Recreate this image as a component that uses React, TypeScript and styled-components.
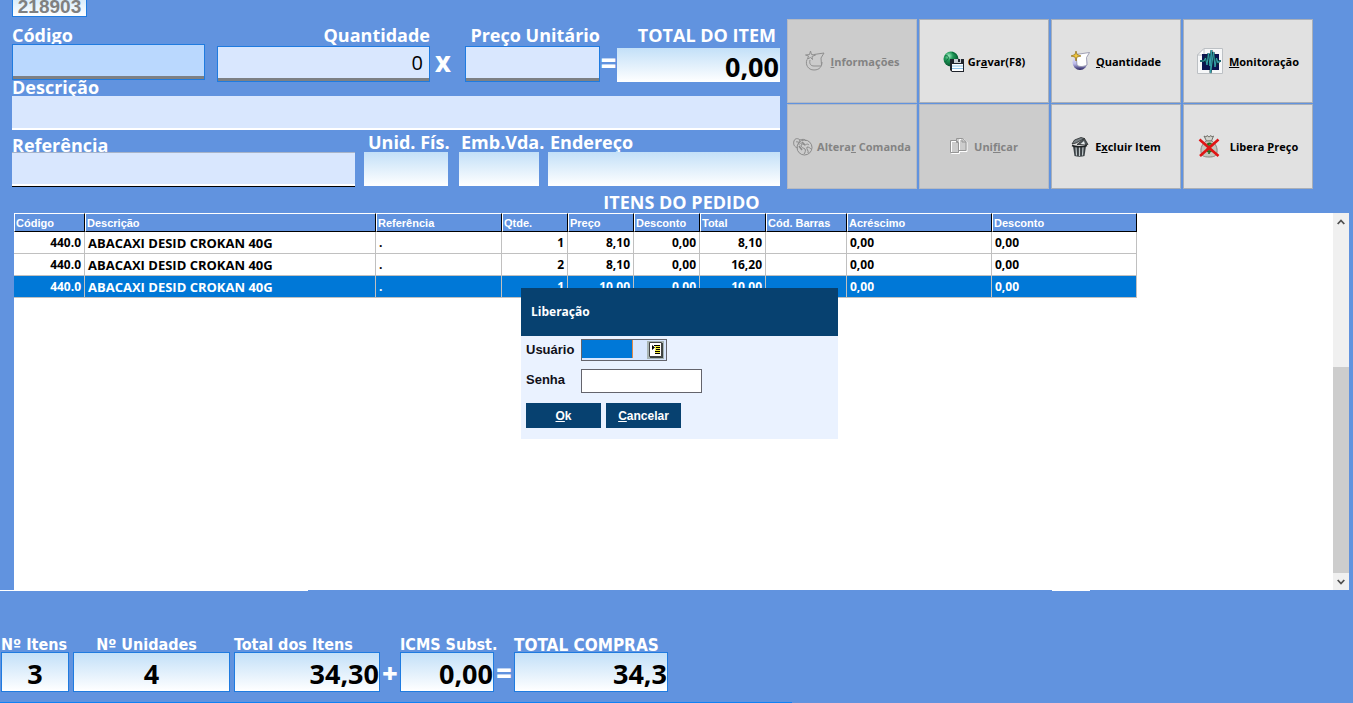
import React from "react";
import styled, { createGlobalStyle, css } from "styled-components";

const ui = `"Open Sans", "Noto Sans", sans-serif`;
const classic = `"Liberation Sans", Arial, sans-serif`;
const tahoma = `"DejaVu Sans Condensed", "DejaVu Sans", sans-serif`;
const blue = "#6193df";
const edge = "#1f7be0";
const navy = "#074170";

const GlobalStyle = createGlobalStyle`
  * { box-sizing: border-box; }
  body { margin: 0; background: ${blue}; font-family: ${ui}; }
  input, button { font-family: inherit; margin: 0; border-radius: 0; }
`;

const Page = styled.main`
  display: flex;
  flex-direction: column;
  min-height: 100vh;
  background: ${blue};
`;

const TopPanel = styled.section`
  display: flex;
  gap: 7px;
  padding: 0 40px 0 12px;
`;

const Form = styled.form`
  flex: 1;
  min-width: 0;
  display: flex;
  flex-direction: column;
`;

const OrderNumber = styled.output`
  width: 75px;
  height: 17px;
  margin-bottom: 9px;
  border: 1px solid ${edge};
  border-top: 0;
  background: linear-gradient(#d9ecfa, #fff);
  color: #808080;
  font: bold 19px/13px ${classic};
  text-align: center;
`;

const ItemRow = styled.div`
  display: grid;
  grid-template-columns: 193fr 12px 213fr 35px 135fr 17px 163fr;
`;

const RefRow = styled.div`
  display: grid;
  grid-template-columns: 343fr 9px 84fr 11px 80fr 9px 232fr;
`;

const Field = styled.div<{ $end?: boolean; $col?: number }>`
  display: flex;
  flex-direction: column;
  min-width: 0;
  ${(p) => p.$col && `grid-column: ${p.$col};`}
  ${(p) => p.$end && "text-align: right;"}
`;

const Label = styled.label<{ $height: number; $line: number; $inset?: number }>`
  height: ${(p) => p.$height}px;
  padding: 0 ${(p) => p.$inset ?? 0}px;
  line-height: ${(p) => p.$line}px;
  color: #fff;
  font-size: 18px;
  font-weight: 700;
  white-space: nowrap;
`;

type Look = "active" | "raised" | "flat" | "sunken" | "glow";

const looks = {
  active: css`
    height: 36px;
    background: #bad8fe;
    border: 1px solid ${edge};
    box-shadow: inset 0 -3px #7d8084;
  `,
  raised: css`
    height: 36px;
    padding-bottom: 3px;
    background: #d9e7fe;
    border: 1px solid ${edge};
    box-shadow: inset 0 -3px #7d8084;
  `,
  flat: css`
    height: 34px;
    background: #d9e7fe;
    border: 0;
    border-bottom: 2px solid #fff;
  `,
  sunken: css`
    height: 35px;
    background: #d9e7fe;
    border: 0;
    border-top: 1px solid #a8b4c8;
    border-bottom: 1px solid #000;
    box-shadow: inset 0 -2px #fff;
  `,
  glow: css`
    height: 34px;
    background: linear-gradient(#c3e0f8, #fff);
    border: 0;
  `,
};

const TextBox = styled.input<{ $look: Look }>`
  width: 100%;
  padding: 0 6px;
  color: #000;
  font-size: 20px;
  text-align: inherit;
  outline: none;
  ${(p) => looks[p.$look]}
`;

const AmountBox = styled(TextBox)`
  padding: 2px 1px 0;
  font-size: 27px;
  font-weight: 700;
`;

const Operator = styled.span<{ $size: number; $start?: boolean }>`
  align-self: end;
  height: 36px;
  padding-left: ${(p) => (p.$start ? 5 : 0)}px;
  color: #fff;
  font-size: ${(p) => p.$size}px;
  font-weight: 800;
  line-height: 34px;
  text-align: ${(p) => (p.$start ? "left" : "center")};
`;

const Actions = styled.div`
  display: grid;
  grid-template-columns: repeat(4, 130px);
  grid-template-rows: 84px 85px;
  gap: 1px 2px;
  padding-top: 19px;
`;

const ActionButton = styled.button<{ $gap?: number }>`
  display: flex;
  align-items: center;
  justify-content: center;
  gap: ${(p) => p.$gap ?? 6}px;
  padding: 0;
  border: 1px solid #a9afb8;
  background: #e1e1e1;
  color: #000;
  font-size: 11px;
  font-weight: 700;
  white-space: nowrap;
  &:disabled {
    border-color: #b6bac2;
    background: #ccc;
    color: #838383;
  }
  svg { flex: none; }
`;

const SectionTitle = styled.h1`
  margin: 0 4px 0 14px;
  height: 24px;
  color: #fff;
  font-size: 18px;
  font-weight: 700;
  line-height: 26px;
  text-align: center;
`;

const ListPanel = styled.section`
  position: relative;
  flex: 1;
  display: flex;
  min-height: 377px;
  margin: 0 4px 0 14px;
  background: #fff;
`;

const TableArea = styled.div`
  flex: 1;
  min-width: 0;
`;

const Table = styled.table`
  width: 1123px;
  table-layout: fixed;
  border-collapse: separate;
  border-spacing: 0;
`;

const HeadCell = styled.th`
  height: 19px;
  padding: 0 0 0 1px;
  border: 1px solid #000;
  border-top-color: #fff;
  border-left-color: #fff;
  background: ${blue};
  color: #fff;
  font: bold 11px/16px ${classic};
  text-align: left;
  white-space: nowrap;
`;

const BodyRow = styled.tr<{ $selected?: boolean }>`
  background: ${(p) => (p.$selected ? "#0078d7" : "#fff")};
  color: ${(p) => (p.$selected ? "#fff" : "#000")};
`;

const Cell = styled.td<{ $end?: boolean; $name?: boolean }>`
  height: 22px;
  padding: 1px 3px 0;
  border-right: 1px solid #c0c0c0;
  border-bottom: 1px solid #c0c0c0;
  font-size: ${(p) => (p.$name ? 13 : 12)}px;
  font-weight: 700;
  line-height: 20px;
  text-align: ${(p) => (p.$end ? "right" : "left")};
  white-space: nowrap;
`;

const ScrollBar = styled.div`
  display: flex;
  flex-direction: column;
  width: 16px;
  background: #f0f0f0;
`;

const ScrollArrow = styled.button`
  display: flex;
  align-items: center;
  justify-content: center;
  height: 17px;
  padding: 0;
  border: 0;
  background: #f0f0f0;
`;

const ScrollTrack = styled.div`
  flex: 137;
`;

const ScrollThumb = styled.div`
  flex: 206;
  background: #cdcdcd;
`;

const Dialog = styled.form`
  position: absolute;
  top: 75px;
  left: 507px;
  width: 317px;
  background: #eaf2ff;
  font-family: ${classic};
`;

const DialogTitle = styled.h2`
  margin: 0;
  padding-left: 10px;
  background: ${navy};
  color: #fff;
  font: bold 12px/48px ${ui};
`;

const DialogBody = styled.div`
  display: grid;
  grid-template-columns: 55px auto;
  padding: 3px 5px 11px;
`;

const DialogLabel = styled.label`
  color: #101018;
  font-size: 13px;
  font-weight: 700;
  line-height: 22px;
`;

const Lookup = styled.div`
  display: flex;
  width: 86px;
  height: 22px;
  margin-bottom: 8px;
  padding-right: 2px;
  border: 1px solid #64646c;
  background: #d9e7fe;
`;

const LookupInput = styled.input`
  width: 51px;
  height: 18px;
  padding: 0;
  border: 0;
  border-right: 1px solid #e08a4a;
  background: #0078d7;
  color: #fff;
  outline: none;
`;

const LookupButton = styled.button`
  display: flex;
  align-items: center;
  justify-content: center;
  width: 17px;
  height: 18px;
  margin: 1px 0 0 auto;
  padding: 0;
  border: 0;
  background: #a9b5b5;
`;

const PasswordInput = styled.input`
  width: 121px;
  height: 24px;
  margin-bottom: 10px;
  border: 1px solid #64646c;
  background: #fff;
  outline: none;
`;

const DialogActions = styled.div`
  grid-column: 1 / -1;
  display: flex;
  gap: 5px;
`;

const DialogButton = styled.button`
  width: 75px;
  height: 25px;
  padding: 0;
  border: 0;
  background: ${navy};
  color: #fff;
  font-size: 12px;
  font-weight: 700;
`;

const Footer = styled.footer`
  display: flex;
  align-items: flex-start;
  height: 113px;
  padding: 44px 0 0 1px;
  background:
    linear-gradient(#fff, #fff) 0 0 / 308px 1px no-repeat,
    linear-gradient(#fff, #fff) 1052px 0 / 38px 1px no-repeat,
    linear-gradient(#1081f5, #1081f5) 0 100% / 792px 1px no-repeat;
`;

const Total = styled.div<{ $width: number; $gap?: number; $align?: string }>`
  display: flex;
  flex-direction: column;
  width: ${(p) => p.$width}px;
  margin-right: ${(p) => p.$gap ?? 0}px;
  text-align: ${(p) => p.$align ?? "right"};
`;

const TotalLabel = styled.label<{ $center?: boolean; $strong?: boolean }>`
  height: 18px;
  padding-right: ${(p) => (p.$center ? 10 : 0)}px;
  color: #fff;
  font: bold ${(p) => (p.$strong ? 17 : 16)}px/22px ${tahoma};
  text-align: ${(p) => (p.$center ? "center" : "left")};
  white-space: nowrap;
`;

const TotalBox = styled.input`
  width: 100%;
  height: 40px;
  padding: 2px 0 0;
  border: 1px solid ${edge};
  background: linear-gradient(#c3e0f8, #fff);
  color: #000;
  font-size: 27px;
  font-weight: 700;
  text-align: inherit;
  outline: none;
`;

const TotalSign = styled.span`
  width: 20px;
  padding-top: 20px;
  color: #fff;
  font-size: 27px;
  font-weight: 800;
  line-height: 38px;
  text-align: center;
`;

const InfoIcon = () => (
  <svg width="20" height="20" viewBox="0 0 20 20" fill="none" stroke="#8f8f8f">
    <path d="M5.500 0l1 3.500 4 .5-3.500 1.500.5 3-2-2-3 1.500 1-3L.5 4l4-.5zM9 3.500l10-1.500-3 5 .5 7" />
    <path d="M2 8.500c-2 5 1 10.500 7 10.500s8-4 8-8M5 9c-1 4 1 6 4 6h7" />
  </svg>
);

const SaveIcon = () => (
  <svg width="21" height="21" viewBox="0 0 21 21">
    <defs>
      <radialGradient id="globe" cx="35%" cy="30%" r="70%">
        <stop offset="0" stopColor="#a6ecc4" />
        <stop offset=".4" stopColor="#1f9a58" />
        <stop offset="1" stopColor="#07502c" />
      </radialGradient>
    </defs>
    <circle cx="8" cy="8" r="7.500" fill="url(#globe)" />
    <path d="M2 5c3-1 4 1 3 3s-2 2-3 3M9 1c2 2 5 2 5 5" fill="none" stroke="#0a6a3c" />
    <path d="M7 8h14v13H9l-2-2z" fill="#20242c" />
    <path d="M11 8h7v4h-7z" fill="#c7ccd2" />
    <path d="M15 8h2v3h-2z" fill="#20242c" />
    <path d="M9 13h11v7H9z" fill="#fff" />
    <path d="M9 15h11M9 17.500h11" stroke="#8cc4ec" />
  </svg>
);

const QuantityIcon = () => (
  <svg width="19" height="20" viewBox="0 0 19 20">
    <defs>
      <linearGradient id="orb" x2="0" y2="1">
        <stop offset="0" stopColor="#f4f4ff" />
        <stop offset=".6" stopColor="#b9b6ea" />
        <stop offset="1" stopColor="#25205c" />
      </linearGradient>
    </defs>
    <circle cx="9" cy="11.500" r="7.500" fill="url(#orb)" />
    <path d="M5 3.500l13.500-2-3 5 .5 7.500c-4 2-8 2-10 0z" fill="#fff" stroke="#8c8ca4" strokeWidth=".8" />
    <path d="M5 0l1 3.500L10 5 6 6 5 10 4 6 0 5l4-1.500z" fill="#f2c83c" stroke="#8c6d18" strokeWidth=".7" />
  </svg>
);

const MonitorIcon = () => (
  <svg width="26" height="26" viewBox="0 0 26 26">
    <path d="M7 .5h18.500v25H.5V7z" fill="#f6f7f8" stroke="#bcc0c4" />
    <path d="M.5 7H7V.5z" fill="#fff" stroke="#bcc0c4" />
    <path d="M5 6h17v16H5z" fill="#0b1450" />
    <path
      d="M3 13h4l1.500-3 1.500 7 1.500-12 1.500 13L14.500 2l-1 23 3-21 1.500 15 1.500-9 1.500 5 1-2h2"
      fill="none"
      stroke="#0a3038"
      strokeWidth="2"
    />
    <path
      d="M3 13h4l1.500-3 1.500 7 1.500-12 1.500 13L14.500 2l-1 23 3-21 1.500 15 1.500-9 1.500 5 1-2h2"
      fill="none"
      stroke="#36a4ae"
      strokeWidth="1"
    />
  </svg>
);

const ChangeIcon = () => (
  <svg width="20" height="18" viewBox="0 0 20 18" fill="none" stroke="#8a8a8a">
    <circle cx="11.500" cy="9.500" r="7.500" />
    <path d="M5 10C1 9 0 6 1 3s4-3 6-1c2-1 5-1 6 1M3 4c2-1 3 1 3 3M7 2C5 4 7 6 9 5" />
    <path d="M8 7c2-2 3 0 4 0s2-2 4 0M8 7c0 3 3 3 4 4s0 4-1 5M14 9c2 0 3 1 4 2M14 9c-1 3 2 3 1 6" />
    <path d="M9 4l3 3M6 8l3 4" strokeWidth="1.500" />
  </svg>
);

const MergeIcon = () => (
  <svg width="18" height="17" viewBox="0 0 18 17">
    <g fill="none" stroke="#fff" transform="translate(1 1)">
      <path d="M.5 2.500h6l2 2v10h-8zM8.500 4.500v-4h5l2.500 3v9h-7" />
    </g>
    <g fill="none" stroke="#969696">
      <path d="M.5 2.500h6l2 2v10h-8zM6.500 2.500v2h2" />
      <path d="M6.500 2v-1.500h6l3.500 3v9H8.500M12 .5v3.500h4" />
    </g>
  </svg>
);

const TrashIcon = () => (
  <svg width="18" height="20" viewBox="0 0 18 20">
    <path d="M2 9h13l-1.500 10c-3 1-7 1-10 0z" fill="#3a4044" />
    <path d="M5 10l.5 8.500M8.500 10v9M12 10l-.5 8.500" stroke="#c2cacc" strokeWidth="1.200" />
    <path d="M1 8.500c3 1.500 11 1.500 15 0" stroke="#1e2224" strokeWidth="1.500" fill="none" />
    <path d="M1 7L3.500 3 10 .5l3.500 1L5 6z" fill="#788084" stroke="#26292b" strokeWidth=".8" />
    <path d="M6 7.500l7.500-6 3.500 6z" fill="#4e5558" stroke="#1e2224" strokeWidth=".7" />
    <path d="M9.500 7l3.500-3 1 3.500" fill="#e6eaec" />
  </svg>
);

const PriceIcon = () => (
  <svg width="22" height="23" viewBox="0 0 22 23">
    <path d="M6 1l2 1 1-1.500L11 2l2-1.500L14 2l1.500-1-2 5h-5z" fill="#d2d2cc" stroke="#66665f" strokeWidth=".9" />
    <path d="M8 6h6c4 3 5.500 7 5 11-.5 4-3 5-8 5s-7.500-1-8-5 1-8 5-11z" fill="#c3c5bd" stroke="#85867d" />
    <path d="M9 9.500c3-2 5-1 4 1s-5 3-4 5 4 2 5-1M11 8v11" fill="none" stroke="#2a6a1e" strokeWidth="1.600" />
    <path d="M1.500 4.500L20.500 21M20.500 4.500L2 21" stroke="#e01414" strokeWidth="2.600" />
  </svg>
);

const ListIcon = () => (
  <svg width="14" height="16" viewBox="0 0 14 16">
    <path d="M1 1h13v15H1z" fill="#3c4444" />
    <path d="M.5.5h12v14H.5z" fill="#fff" stroke="#444" />
    <path d="M6 4h5v8H6z" fill="#f6ee3c" />
    <path d="M3 3v5l3-2.500z" fill="#000" />
    <path d="M5 3.500h6M7 5.500h4M7 7.500h4M6 9.500h5M6 11.500h5" stroke="#000" />
  </svg>
);

const Chevron = ({ up }: { up?: boolean }) => (
  <svg width="8" height="6" viewBox="0 0 8 6" fill="none" stroke="#505050" strokeWidth="1.800">
    <path d={up ? "M.7 5L4 1.500 7.300 5" : "M.7 1L4 4.500 7.300 1"} />
  </svg>
);

const columns = [
  { title: "Código", width: 71, end: true },
  { title: "Descrição", width: 291, name: true },
  { title: "Referência", width: 126 },
  { title: "Qtde.", width: 66, end: true },
  { title: "Preço", width: 66, end: true },
  { title: "Desconto", width: 66, end: true },
  { title: "Total", width: 66, end: true },
  { title: "Cód. Barras", width: 81 },
  { title: "Acréscimo", width: 145 },
  { title: "Desconto", width: 145 },
];

const items = [
  ["440.0", "ABACAXI DESID CROKAN 40G", ".", "1", "8,10", "0,00", "8,10", "", "0,00", "0,00"],
  ["440.0", "ABACAXI DESID CROKAN 40G", ".", "2", "8,10", "0,00", "16,20", "", "0,00", "0,00"],
  ["440.0", "ABACAXI DESID CROKAN 40G", ".", "1", "10,00", "0,00", "10,00", "", "0,00", "0,00"],
];

export default function App() {
  return (
    <>
      <GlobalStyle />
      <Page>
        <TopPanel>
          <Form>
            <OrderNumber>218903</OrderNumber>
            <ItemRow>
              <Field>
                <Label htmlFor="codigo" $height={18} $line={18}>Código</Label>
                <TextBox id="codigo" $look="active" />
              </Field>
              <Field $col={3} $end>
                <Label htmlFor="quantidade" $height={20} $line={18}>Quantidade</Label>
                <TextBox id="quantidade" $look="raised" defaultValue="0" />
              </Field>
              <Operator $size={22} $start>X</Operator>
              <Field $end>
                <Label htmlFor="preco" $height={20} $line={18}>Preço Unitário</Label>
                <TextBox id="preco" $look="raised" />
              </Field>
              <Operator $size={27}>=</Operator>
              <Field $end>
                <Label htmlFor="total-item" $height={22} $line={18} $inset={4}>TOTAL DO ITEM</Label>
                <AmountBox id="total-item" $look="glow" defaultValue="0,00" readOnly />
              </Field>
            </ItemRow>
            <Field>
              <Label htmlFor="descricao" $height={14} $line={10}>Descrição</Label>
              <TextBox id="descricao" $look="flat" />
            </Field>
            <RefRow>
              <Field>
                <Label htmlFor="referencia" $height={22} $line={30}>Referência</Label>
                <TextBox id="referencia" $look="sunken" />
              </Field>
              <Field $col={3}>
                <Label htmlFor="unidade" $height={22} $line={24} $inset={4}>Unid. Fís.</Label>
                <TextBox id="unidade" $look="glow" readOnly />
              </Field>
              <Field $col={5}>
                <Label htmlFor="embalagem" $height={22} $line={24} $inset={2}>Emb.Vda.</Label>
                <TextBox id="embalagem" $look="glow" readOnly />
              </Field>
              <Field $col={7}>
                <Label htmlFor="endereco" $height={22} $line={24} $inset={2}>Endereço</Label>
                <TextBox id="endereco" $look="glow" readOnly />
              </Field>
            </RefRow>
          </Form>
          <Actions>
            <ActionButton disabled><InfoIcon /><span><u>I</u>nformações</span></ActionButton>
            <ActionButton $gap={4}><SaveIcon /><span>Gr<u>a</u>var(F8)</span></ActionButton>
            <ActionButton><QuantityIcon /><span><u>Q</u>uantidade</span></ActionButton>
            <ActionButton><MonitorIcon /><span><u>M</u>onitoração</span></ActionButton>
            <ActionButton disabled $gap={4}><ChangeIcon /><span>Altera<u>r</u> Comanda</span></ActionButton>
            <ActionButton disabled><MergeIcon /><span>Uni<u>f</u>icar</span></ActionButton>
            <ActionButton><TrashIcon /><span>E<u>x</u>cluir Item</span></ActionButton>
            <ActionButton $gap={10}><PriceIcon /><span>Libera <u>P</u>reço</span></ActionButton>
          </Actions>
        </TopPanel>

        <SectionTitle>ITENS DO PEDIDO</SectionTitle>

        <ListPanel>
          <TableArea>
            <Table>
              <colgroup>
                {columns.map((c, i) => <col key={i} width={c.width} />)}
              </colgroup>
              <thead>
                <tr>{columns.map((c, i) => <HeadCell key={i}>{c.title}</HeadCell>)}</tr>
              </thead>
              <tbody>
                {items.map((row, r) => (
                  <BodyRow key={r} $selected={r === 2}>
                    {row.map((value, i) => (
                      <Cell key={i} $end={columns[i].end} $name={columns[i].name}>{value}</Cell>
                    ))}
                  </BodyRow>
                ))}
              </tbody>
            </Table>
          </TableArea>
          <ScrollBar>
            <ScrollArrow type="button" aria-label="Subir"><Chevron up /></ScrollArrow>
            <ScrollTrack />
            <ScrollThumb />
            <ScrollArrow type="button" aria-label="Descer"><Chevron /></ScrollArrow>
          </ScrollBar>

          <Dialog>
            <DialogTitle>Liberação</DialogTitle>
            <DialogBody>
              <DialogLabel htmlFor="usuario">Usuário</DialogLabel>
              <Lookup>
                <LookupInput id="usuario" />
                <LookupButton type="button" aria-label="Pesquisar"><ListIcon /></LookupButton>
              </Lookup>
              <DialogLabel htmlFor="senha">Senha</DialogLabel>
              <PasswordInput id="senha" type="password" />
              <DialogActions>
                <DialogButton type="button"><u>O</u>k</DialogButton>
                <DialogButton type="button"><u>C</u>ancelar</DialogButton>
              </DialogActions>
            </DialogBody>
          </Dialog>
        </ListPanel>

        <Footer>
          <Total $width={68} $gap={4} $align="center">
            <TotalLabel htmlFor="n-itens">Nº Itens</TotalLabel>
            <TotalBox id="n-itens" defaultValue="3" readOnly />
          </Total>
          <Total $width={157} $gap={4} $align="center">
            <TotalLabel htmlFor="n-unidades" $center>Nº Unidades</TotalLabel>
            <TotalBox id="n-unidades" defaultValue="4" readOnly />
          </Total>
          <Total $width={146}>
            <TotalLabel htmlFor="total-itens">Total dos Itens</TotalLabel>
            <TotalBox id="total-itens" defaultValue="34,30" readOnly />
          </Total>
          <TotalSign>+</TotalSign>
          <Total $width={94}>
            <TotalLabel htmlFor="icms">ICMS Subst.</TotalLabel>
            <TotalBox id="icms" defaultValue="0,00" readOnly />
          </Total>
          <TotalSign>=</TotalSign>
          <Total $width={154}>
            <TotalLabel htmlFor="total-compras" $strong>TOTAL COMPRAS</TotalLabel>
            <TotalBox id="total-compras" defaultValue="34,3" readOnly />
          </Total>
        </Footer>
      </Page>
    </>
  );
}
